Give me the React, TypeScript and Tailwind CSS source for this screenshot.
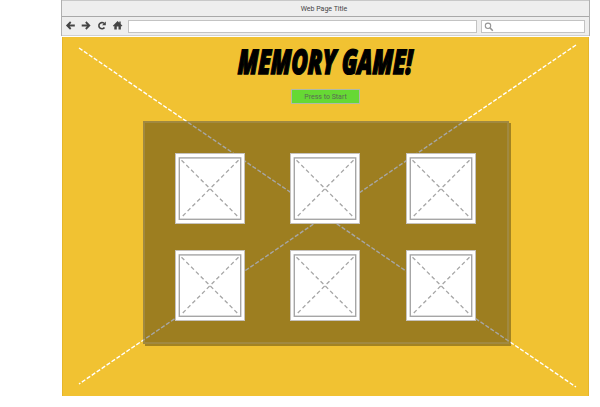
function Card() {
  return (
    <div className="h-[71px] w-[70px] border border-[#c6c2bd] bg-white p-[3px]">
      <svg className="-mx-px h-[63px] w-16" viewBox="0 0 64 63" fill="none" stroke="#a6a6a6">
        <rect x="1.3" y="0.9" width="61.4" height="61.4" strokeWidth="1.4" />
        <path d="M3.5 3.2L60.5 60.2M60.5 3.2L3.5 60.2" strokeWidth="1.3" strokeDasharray="4 2.8" />
      </svg>
    </div>
  );
}

function NavIcons() {
  return (
    <svg className="h-[18px] w-[64px]" viewBox="0 0 64 18" fill="none" stroke="#454545" strokeWidth="1.8">
      <path d="M12.8 8.5H5.5M8.7 5L5.2 8.5L8.7 12" />
      <path d="M19.7 8.5H27M23.8 5L27.3 8.5L23.8 12" />
      <path d="M42.5 10.5A3.1 3.1 0 1 1 42 6.3" strokeWidth="1.6" />
      <path d="M43.8 4.5V8.3H40Z" fill="#454545" stroke="none" />
      <path d="M50.9 8.8L55.6 4.1L57.3 5.7V4.6H58.7V7.1L60.4 8.8L59.7 9.5L58.9 8.8V12.6H56.5V9.5H54.8V12.6H52.3V8.8L51.6 9.5Z" fill="#454545" stroke="none" />
    </svg>
  );
}

export default function App() {
  return (
    <div className="h-[407px] w-[600px] overflow-hidden bg-white font-['Roboto','Liberation_Sans',sans-serif]">
      <div className="ml-[61px] w-[529px]">
        <header className="h-9 border-x border-[#b0b0b0] bg-[#eeeeee]">
          <div className="flex h-[17px] items-center justify-center border-t border-b border-t-[#c8c8c8] border-b-[#a9a9a9] pt-px pr-[3px] text-[7px] leading-none text-[#444]">
            Web Page Title
          </div>
          <div className="flex h-[19px] items-center border-b border-[#d0d0d0]">
            <NavIcons />
            <div className="ml-[2px] h-[13px] w-[349px] border border-[#c3c3c3] bg-white" />
            <div className="ml-1 h-[13px] w-[104px] border border-[#c3c3c3] bg-white">
              <svg className="ml-[2px] h-[11px] w-[10px]" viewBox="0 0 10 11" fill="none" stroke="#969696" strokeWidth="1.1">
                <circle cx="4" cy="4.8" r="2.7" />
                <path d="M6 6.9L8.8 9.7" strokeWidth="1.5" />
              </svg>
            </div>
          </div>
        </header>
        <main className="relative mt-px ml-px flex h-[359px] w-[527px] flex-col items-center border-x border-[#e5b62c] bg-[#f1c232]">
          <svg className="absolute top-0 -left-px h-[359px] w-[527px]" viewBox="62 37 527 359" stroke="white" strokeWidth="1.4" strokeDasharray="4.2 1.8">
            <path d="M79 48L576 387M576 45L79 384" />
          </svg>
          <h1 className="relative mt-[7px] h-[35px] origin-center -skew-x-[3deg] scale-x-[0.66] font-['Open_Sans','Liberation_Sans',sans-serif] text-[34px] leading-[35px] font-extrabold whitespace-nowrap text-black italic [-webkit-text-stroke:1.5px_black]">
            MEMORY GAME!
          </h1>
          <button className="relative mt-[10px] flex h-[15px] w-[69px] items-center justify-center border border-[#b3b9a6] bg-[#66d934] pt-px text-[7px] leading-none text-[#5b6a54]">
            Press to Start
          </button>
          <section className="relative mt-[17px] ml-px grid h-[223px] w-[366px] grid-cols-[115px_116px_70px] content-start gap-y-[26px] border-2 border-[#a89a70]/40 bg-[rgba(0,0,0,0.35)] pt-[30px] pl-[30px] shadow-[2px_2px_0_rgba(0,0,0,0.32)]">
            {Array.from({ length: 6 }, (_, i) => (
              <Card key={i} />
            ))}
          </section>
        </main>
      </div>
    </div>
  );
}
